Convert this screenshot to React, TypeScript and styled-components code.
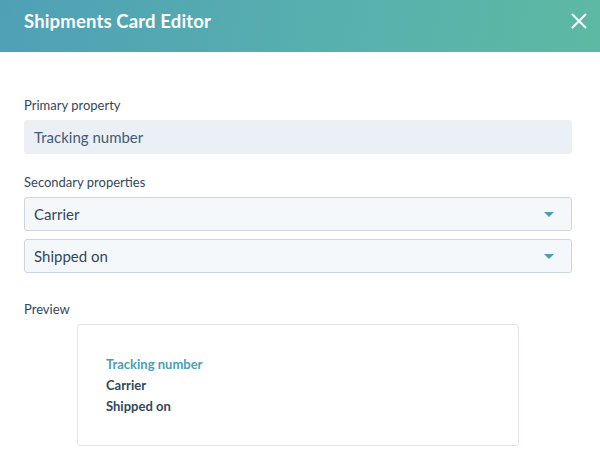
import React from 'react';
import styled, { createGlobalStyle } from 'styled-components';

const GlobalStyle = createGlobalStyle`
  html, body {
    margin: 0;
    padding: 0;
    background: #ffffff;
    font-family: Lato, "Open Sans", sans-serif;
    color: #33475b;
  }
  * { box-sizing: border-box; }
`

const Modal = styled.div`
  width: 600px;
  height: 463px;
  background: #ffffff;
  overflow: hidden;
`

const Header = styled.header`
  height: 52px;
  display: flex;
  align-items: center;
  justify-content: space-between;
  padding: 0 6px 10px 24px;
  background: linear-gradient(100deg, #4fa0b6 0%, #58b0ae 55%, #5db9a3 100%);
`

const Title = styled.h1`
  margin: 0;
  font-size: 18.5px;
  line-height: 22px;
  font-weight: 700;
  color: #ffffff;
  letter-spacing: 0.15px;
`

const CloseButton = styled.button`
  width: 30px;
  height: 30px;
  border: 0;
  padding: 0;
  background: transparent;
  display: flex;
  align-items: center;
  justify-content: center;
  cursor: pointer;
`

const Body = styled.div`
  padding: 44px 28px 0 24px;
  display: flex;
  flex-direction: column;
`

const Label = styled.div<{ $top?: number }>`
  font-size: 13px;
  line-height: 18px;
  color: #33475b;
  margin-top: ${p => p.$top ?? 0}px;
  margin-bottom: 6px;
`

const ReadOnlyField = styled.div`
  height: 34px;
  display: flex;
  align-items: center;
  padding: 0 10px;
  border-radius: 3px;
  background: #eaf0f6;
  font-size: 15px;
  color: #425b76;
`

const SelectStack = styled.div`
  display: flex;
  flex-direction: column;
  gap: 8px;
`

const Select = styled.div`
  height: 34px;
  display: flex;
  align-items: center;
  justify-content: space-between;
  padding: 0 17px 0 9px;
  border: 1px solid #cbd6e2;
  border-radius: 3px;
  background: #f5f8fa;
  font-size: 15px;
  color: #33475b;
`

const Caret = styled.span`
  width: 0;
  height: 0;
  border-left: 5px solid transparent;
  border-right: 5px solid transparent;
  border-top: 5px solid #4a9fb5;
`

const PreviewCard = styled.div`
  align-self: center;
  width: 442px;
  height: 122px;
  border: 1px solid #e3e3ee;
  border-radius: 3px;
  padding: 29px 28px;
  display: flex;
  flex-direction: column;
`

const PreviewLine = styled.div<{ $accent?: boolean }>`
  font-size: 13px;
  line-height: 21px;
  font-weight: 700;
  color: ${p => (p.$accent ? '#4a9fb5' : '#33475b')};
`

function CloseIcon() {
  return (
    <svg width="16" height="16" viewBox="0 0 16 16">
      <path d="M1.5 1.5 L14.5 14.5 M14.5 1.5 L1.5 14.5" stroke="#ffffff" strokeWidth="2" strokeLinecap="round" />
    </svg>
  )
}

const secondary = ['Carrier', 'Shipped on']

export default function App() {
  return (
    <Modal>
      <GlobalStyle />
      <Header>
        <Title>Shipments Card Editor</Title>
        <CloseButton aria-label="Close">
          <CloseIcon />
        </CloseButton>
      </Header>
      <Body>
        <Label>Primary property</Label>
        <ReadOnlyField>Tracking number</ReadOnlyField>

        <Label $top={19}>Secondary properties</Label>
        <SelectStack>
          {secondary.map(name => (
            <Select key={name}>
              {name}
              <Caret />
            </Select>
          ))}
        </SelectStack>

        <Label $top={27}>Preview</Label>
        <PreviewCard>
          <PreviewLine $accent>Tracking number</PreviewLine>
          {secondary.map(name => (
            <PreviewLine key={name}>{name}</PreviewLine>
          ))}
        </PreviewCard>
      </Body>
    </Modal>
  )
}
